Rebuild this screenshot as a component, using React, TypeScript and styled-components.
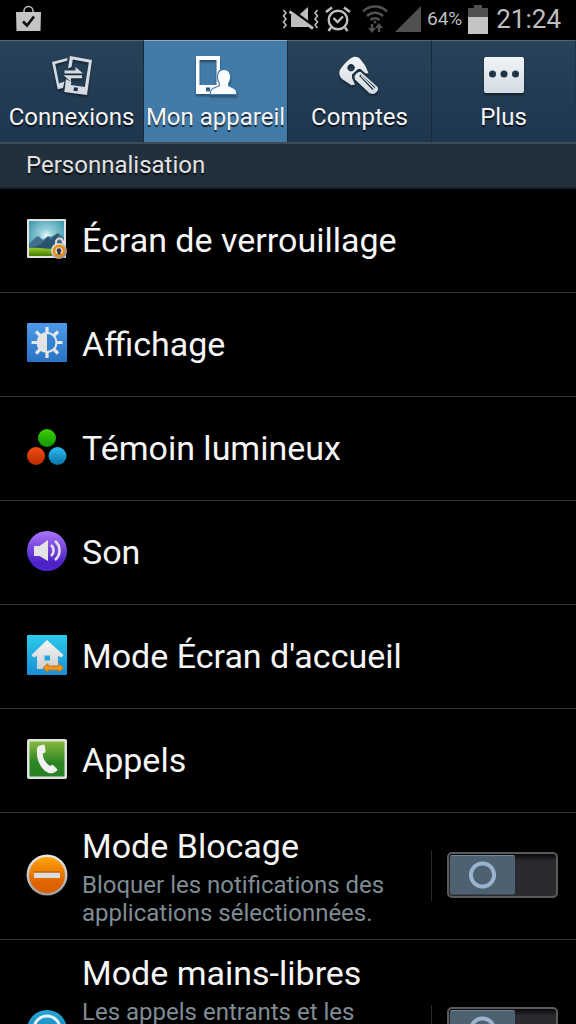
import React, { useState } from "react";
import styled, { createGlobalStyle, css } from "styled-components";

const GlobalStyle = createGlobalStyle`
  *, *::before, *::after { box-sizing: border-box; }
  html, body { margin: 0; background: #000; }
  body { font-family: Roboto, "Noto Sans", sans-serif; color: #f5f5f5; }
`;

const Screen = styled.div`
  display: flex;
  flex-direction: column;
  width: 100%;
  height: 100vh;
  overflow: hidden;
  background: #000;
`;

const StatusBar = styled.header`
  display: flex;
  flex: none;
  align-items: center;
  justify-content: space-between;
  height: 40px;
  padding: 0 15px 2px 16px;
  color: #bebebe;
`;

const StatusGroup = styled.div`
  display: flex;
  align-items: center;
  gap: 6px;
`;

const Battery = styled.span`
  font-size: 19px;
  line-height: 40px;
`;

const Clock = styled.time`
  margin-left: 2px;
  font-size: 26px;
  line-height: 40px;
`;

const Glyph = styled.svg`
  display: block;
  flex: none;
  overflow: visible;
`;

const TabBar = styled.nav`
  display: grid;
  flex: none;
  grid-template-columns: repeat(4, 1fr);
  height: 102px;
`;

const Tab = styled.button<{ $active: boolean }>`
  display: flex;
  flex-direction: column;
  align-items: center;
  min-width: 0;
  margin: 0;
  padding: 11px 0 0;
  border: 0;
  border-top: 1px solid #53697a;
  border-right: 1px solid #182a3a;
  background: linear-gradient(#274259, #1e364e);
  color: #f5f5f5;
  font: inherit;
  font-size: 24px;
  line-height: 28px;
  white-space: nowrap;
  text-shadow: 0 2px 1px rgba(0, 0, 0, 0.7);
  cursor: pointer;

  &:last-child {
    border-right-color: #1e364e;
  }

  ${({ $active }) =>
    $active &&
    css`
      border-top-color: #87aecb;
      background: #437ba8;
    `}

  svg {
    margin-bottom: 7px;
    filter: drop-shadow(0 2px 1px rgba(0, 0, 0, 0.4));
  }
`;

const SectionTitle = styled.h2`
  flex: none;
  margin: 0;
  padding: 0 26px;
  border-top: 2px solid #3c4c59;
  border-bottom: 2px solid #17222b;
  background: #22303c;
  color: #e2e2e2;
  font-size: 24px;
  font-weight: 400;
  line-height: 43px;
  text-shadow: 0 2px 1px rgba(0, 0, 0, 0.7);
`;

const List = styled.ul`
  flex: 1;
  min-height: 0;
  margin: 0;
  padding: 0;
  overflow-y: auto;
  list-style: none;
  scrollbar-width: none;
`;

const Row = styled.li`
  display: flex;
  align-items: center;
  min-height: 104px;
  padding: 0 18px 0 26px;
  border-bottom: 1px solid #333;
`;

const RowLink = styled.a`
  display: flex;
  flex: 1;
  align-items: center;
  gap: 14px;
  min-width: 0;
  padding: 11px 0 12px;
  color: inherit;
  text-decoration: none;

  > svg {
    margin-bottom: 2px;
  }
`;

const RowText = styled.span`
  display: flex;
  flex-direction: column;
  gap: 3px;
  min-width: 0;
`;

const Title = styled.span`
  font-size: 34px;
  line-height: 44px;
`;

const Summary = styled.span`
  color: #7f8c94;
  font-size: 24px;
  line-height: 28px;
`;

const SwitchArea = styled.label`
  display: flex;
  flex: none;
  align-items: center;
  height: 51px;
  margin: 0 0 2px 8px;
  padding-left: 15px;
  border-left: 1px solid #2a2a2a;
  cursor: pointer;
`;

const SwitchInput = styled.input`
  display: grid;
  align-items: stretch;
  width: 111px;
  height: 46px;
  margin: 0;
  padding: 1px;
  appearance: none;
  border: 2px solid #5a5a5a;
  border-radius: 5px;
  background: linear-gradient(#08080a, #2a2a2f 7px);
  cursor: pointer;

  &::before {
    content: "";
    width: 65px;
    border-top: 1px solid #6f8596;
    border-bottom: 1px solid #3a4b58;
    border-radius: 2px;
    background: radial-gradient(circle, #4d6171 9px, #9ab4cd 10px, #9ab4cd 13px, #4d6171 14px);
  }

  &:checked::before {
    justify-self: end;
  }
`;

const BagIcon = () => (
  <Glyph width="26" height="26" viewBox="0 0 26 26" aria-hidden="true">
    <path d="M8 7V5a4.500 4.500 0 0 1 9 0v2" fill="none" stroke="#bebebe" strokeWidth="1.500" />
    <path d="M0 6h25l-.5 19H.5z" fill="#c4c4c4" />
    <path d="M7 15.500l4 4L18 10.500" fill="none" stroke="#111" strokeWidth="2.800" />
  </Glyph>
);

const VibrateIcon = () => (
  <Glyph width="37" height="22" viewBox="0 0 37 22" aria-hidden="true">
    <g fill="none" stroke="#bebebe" strokeWidth="1.600">
      <path d="M1.500 2l2.500 3-2.500 3L4 11l-2.500 3L4 17l-2.500 3" />
      <path d="M35.500 2L33 5l2.500 3L33 11l2.500 3-2.500 3 2.500 3" />
    </g>
    <path d="M9 7h8l9-8v20H9z" fill="#bebebe" />
    <path d="M8 1.500l24 17.800" stroke="#000" strokeWidth="4" />
    <path d="M7.500 3.500L31 20.500" stroke="#bebebe" strokeWidth="2.800" />
  </Glyph>
);

const AlarmIcon = () => (
  <Glyph width="26" height="26" viewBox="0 0 26 26" fill="none" stroke="#bebebe" aria-hidden="true">
    <circle cx="13" cy="14" r="9.300" strokeWidth="2.400" />
    <path d="M8.500 12l4 4 5.500-5.500M6 21.500L3.500 25M20 21.500l2.500 3.500" strokeWidth="2.400" />
    <path d="M1 6l6-4.500M25 6l-6-4.500" strokeWidth="2.800" />
  </Glyph>
);

const WifiSlot = styled.span`
  margin-left: 4px;
`;

const WifiIcon = () => (
  <Glyph width="28" height="28" viewBox="0 0 28 28" fill="none" stroke="#505050" aria-hidden="true">
    <path d="M2 6.500a17 17 0 0 1 24 0M6 11a11.500 11.500 0 0 1 16 0M9.500 15a6.500 6.500 0 0 1 9 0" strokeWidth="2.600" />
    <circle cx="14" cy="17" r="1.500" fill="#505050" stroke="none" />
    <path d="M11 19v5M18 27v-5" strokeWidth="2.400" />
    <path d="M7 23h8l-4 5zM14 23h8l-4-5z" fill="#505050" stroke="none" />
  </Glyph>
);

const SignalIcon = () => (
  <Glyph width="26" height="26" viewBox="0 0 26 26" aria-hidden="true">
    <path d="M0 26L26 0v26z" fill="#505050" />
  </Glyph>
);

const BatteryIcon = () => (
  <Glyph width="20" height="30" viewBox="0 0 20 30" aria-hidden="true">
    <path d="M6 1h8v3h6v10H0V4h6z" fill="#505050" />
    <path d="M0 13h20v17H0z" fill="#c4c4c4" />
  </Glyph>
);

const TabDefs = ({ id }: { id: string }) => (
  <defs>
    <linearGradient id={id} x1="0" y1="0" x2="0" y2="44" gradientUnits="userSpaceOnUse">
      <stop offset="0" stopColor="#f6f7f8" />
      <stop offset="1" stopColor="#d0dae1" />
    </linearGradient>
  </defs>
);

const ConnectionsIcon = () => (
  <Glyph width="42" height="44" viewBox="0 0 42 44" aria-hidden="true">
    <g fill="#d5dbe0">
      <path d="M1 10l15.500-4-.4 2.800L4.200 12 8 31.500l5.500-2L12 36l-5.300 1.300z" />
      <path
        fillRule="evenodd"
        d="M19 4l22 4-5 35-22.700-3L15 27l5.500 3-.7 3 14 2 4-24.500-16-3-1.300 7.500-3.500 1.500zM23 35.200l-.5 3.500 4 .6.500-3.500z"
      />
      <path d="M13.500 18.500h11V15l7.500 6.500H13.500z" />
      <path d="M31 23.300H12.500l7.500 6.500v-3.500h11z" />
    </g>
  </Glyph>
);

const DeviceIcon = () => (
  <Glyph width="42" height="44" viewBox="0 0 42 44" aria-hidden="true">
    <path fillRule="evenodd" fill="#fafcfe" d="M1 4h24v38H1zM4.500 8v25h17V8zM11 35.500v4h4v-4z" />
    <path
      fill="#fafcfe"
      stroke="#437ba8"
      strokeWidth="2.400"
      paintOrder="stroke"
      d="M29 18c4 0 6 3 6 7 0 3-1 5-2 6v3l6 3c2 1 2 3 2 5H16c0-2 0-4 2-5l7-3v-3c-1-1-2-3-2-6 0-4 2-7 6-7z"
    />
  </Glyph>
);

const KeyIcon = () => (
  <Glyph width="42" height="44" viewBox="0 0 42 44" aria-hidden="true">
    <TabDefs id="keyInk" />
    <path
      fillRule="evenodd"
      fill="url(#keyInk)"
      d="M11.500 6.500c4-2.500 7.500-2.500 10.500 1.500l4.500 6 3 7.300-3 .2-5-4.500h-2.500L13 22.500V26l3 6.500-3.500.7L3 27C0 23.500-.5 20.500 1.500 17c3-4 6-8 10-10.500zM12 12a3.700 3.700 0 1 0 .1 0z"
    />
    <path
      fillRule="evenodd"
      fill="url(#keyInk)"
      d="M15.500 24.500c1-2.500 3-4.500 6-4.800L38.500 35c1 1.500.5 3-.5 4.500-1.500 1.500-2.500 2.500-4 2.500l-3.500-.7L16 27.500zM21.800 22.500l-1.600 1.600L33.500 38l1-1L21.500 24l.8-.8L35.500 36l.8-.8z"
    />
  </Glyph>
);

const MoreIcon = () => (
  <Glyph width="42" height="44" viewBox="0 0 42 44" aria-hidden="true">
    <TabDefs id="moreInk" />
    <rect x="1" y="5" width="40" height="36" rx="2" fill="url(#moreInk)" />
    <g fill="#1f3548">
      <circle cx="9.500" cy="22" r="3.500" />
      <circle cx="21" cy="22" r="3.500" />
      <circle cx="32.500" cy="22" r="3.500" />
    </g>
  </Glyph>
);

const LockScreenIcon = () => (
  <Glyph width="42" height="42" viewBox="0 0 42 42" aria-hidden="true">
    <defs>
      <radialGradient id="sky" cx="0.500" cy="0.420" r="0.600">
        <stop offset="0" stopColor="#f2fcfb" />
        <stop offset="0.300" stopColor="#97d0db" />
        <stop offset="1" stopColor="#439bae" />
      </radialGradient>
      <linearGradient id="grass" x1="0" y1="0" x2="0" y2="1">
        <stop offset="0" stopColor="#9bca2a" />
        <stop offset="1" stopColor="#467c04" />
      </linearGradient>
      <linearGradient id="steel" x1="0" y1="0" x2="1" y2="1">
        <stop offset="0" stopColor="#f4f4f4" />
        <stop offset="1" stopColor="#777" />
      </linearGradient>
    </defs>
    <rect x="1" y="1" width="39" height="39" rx="1" fill="#e4e2dc" />
    <rect x="3" y="3" width="35" height="35" fill="url(#sky)" />
    <path d="M3 26l6-6 3-2 5 4 5-4 3 1 7-4 3 2 3 3v12H3z" fill="#416f8d" />
    <path d="M14 27l8-8 3 3 7-7-1 8 7 4v6H3v-3z" fill="#27536e" />
    <path d="M3 30c10-1 18 1 24 1l11-1v8H3z" fill="url(#grass)" />
    <path d="M30 27v-3a3.500 3.500 0 0 1 7 0v3" fill="none" stroke="#d9d9d9" strokeWidth="2.200" />
    <circle cx="33" cy="33" r="8" fill="url(#steel)" />
    <circle cx="33" cy="33" r="5" fill="#d6d6d6" stroke="#f08b0c" strokeWidth="2.400" />
    <circle cx="33" cy="32.500" r="2.200" fill="#30363c" />
    <path d="M32 33.500h2l.8 3h-3.600z" fill="#30363c" />
  </Glyph>
);

const DisplayIcon = () => (
  <Glyph width="42" height="42" viewBox="0 0 42 42" aria-hidden="true">
    <defs>
      <linearGradient id="displayBg" x1="0" y1="0" x2="0" y2="1">
        <stop offset="0" stopColor="#4c9ae9" />
        <stop offset="1" stopColor="#2973c4" />
      </linearGradient>
    </defs>
    <rect x="1" y="1" width="40" height="39" rx="1" fill="url(#displayBg)" />
    <path
      d="M21 5v6M21 30v6M5.500 20.500h6M30.500 20.500h6M10 9.500l4.500 4.500M27.500 27l4.500 4.500M32 9.500L27.500 14M14.500 27L10 31.500"
      stroke="#e6e6e6"
      strokeWidth="3.200"
    />
    <circle cx="21" cy="20.500" r="9.500" fill="#3482d4" stroke="#e6e6e6" strokeWidth="2" />
    <path d="M21 11a9.500 9.500 0 0 0 0 19z" fill="#e3e3e3" />
  </Glyph>
);

const LedIcon = () => (
  <Glyph width="42" height="42" viewBox="0 0 42 42" aria-hidden="true">
    <defs>
      <linearGradient id="ledGreen" x1="0" y1="0" x2="0" y2="1">
        <stop offset="0" stopColor="#3bd000" />
        <stop offset="1" stopColor="#129508" />
      </linearGradient>
      <linearGradient id="ledRed" x1="0" y1="0" x2="0" y2="1">
        <stop offset="0" stopColor="#f04d14" />
        <stop offset="1" stopColor="#bc2a00" />
      </linearGradient>
      <linearGradient id="ledBlue" x1="0" y1="0" x2="0" y2="1">
        <stop offset="0" stopColor="#2dbdf0" />
        <stop offset="1" stopColor="#0872a6" />
      </linearGradient>
    </defs>
    <circle cx="21" cy="12" r="9" fill="url(#ledGreen)" />
    <circle cx="10" cy="30" r="9" fill="url(#ledRed)" />
    <circle cx="31.500" cy="30" r="9" fill="url(#ledBlue)" />
  </Glyph>
);

const SoundIcon = () => (
  <Glyph width="42" height="42" viewBox="0 0 42 42" aria-hidden="true">
    <defs>
      <linearGradient id="soundBg" x1="0" y1="0" x2="0" y2="1">
        <stop offset="0" stopColor="#ab74f8" />
        <stop offset="0.800" stopColor="#4b20c6" />
        <stop offset="1" stopColor="#5226cf" />
      </linearGradient>
    </defs>
    <circle cx="21" cy="21" r="20" fill="url(#soundBg)" />
    <path d="M8 16h5.500l8.500-6v21l-8.500-5H8z" fill="#e4e4e4" />
    <path d="M25 15c3.500 3 3.500 8 0 11M29 11c6 5 6 14 0 19" fill="none" stroke="#e4e4e4" strokeWidth="2.600" />
  </Glyph>
);

const HomeIcon = () => (
  <Glyph width="42" height="42" viewBox="0 0 42 42" aria-hidden="true">
    <defs>
      <linearGradient id="homeBg" x1="0" y1="0" x2="0" y2="1">
        <stop offset="0" stopColor="#2bcbea" />
        <stop offset="1" stopColor="#188fd6" />
      </linearGradient>
      <linearGradient id="homeWall" x1="0" y1="0" x2="0" y2="1">
        <stop offset="0" stopColor="#f6f6f6" />
        <stop offset="1" stopColor="#cfcfcf" />
      </linearGradient>
    </defs>
    <rect x="1" y="1" width="40" height="40" rx="1" fill="url(#homeBg)" />
    <path
      fillRule="evenodd"
      fill="url(#homeWall)"
      d="M21 6l16.500 15-2 2.500L32 22v13H11V22l-3.500 1.500-2-2.500zM18.500 21.500v5h5.500v-5z"
    />
    <path d="M17 34l5-4.500v2.500h10.500v-2.500l5 4.500-5 4.500V36H22v2.500z" fill="#f7941c" stroke="#b4782e" strokeWidth="1" />
  </Glyph>
);

const CallIcon = () => (
  <Glyph width="42" height="42" viewBox="0 0 42 42" aria-hidden="true">
    <defs>
      <linearGradient id="callBg" x1="0" y1="0" x2="0" y2="1">
        <stop offset="0" stopColor="#87b83d" />
        <stop offset="0.600" stopColor="#2c8524" />
        <stop offset="1" stopColor="#297f25" />
      </linearGradient>
    </defs>
    <rect x="1" y="1" width="40" height="40" rx="2" fill="#dfe3df" />
    <rect x="3.500" y="3.500" width="35" height="35" fill="url(#callBg)" />
    <path
      d="M12.500 8l5-1.500c1 0 1.300 1 1.500 2.500l.6 4c0 1.500-1 2-2.800 2.500-.3 5 3.500 10.500 7.500 12.500 1.500-1.500 2.300-1.500 3.300-.5l3 3c1 1 1 2 0 2.500-3 2.500-6 3-9 1.500C14 31 10 20 11 11.500c.2-1.500.5-3 1.500-3.500z"
      fill="#f0f0f0"
    />
  </Glyph>
);

const BlockIcon = () => (
  <Glyph width="42" height="42" viewBox="0 0 42 42" aria-hidden="true">
    <defs>
      <linearGradient id="blockBg" x1="0" y1="0" x2="0" y2="1">
        <stop offset="0" stopColor="#ffa30a" />
        <stop offset="0.700" stopColor="#e06400" />
        <stop offset="1" stopColor="#d85f00" />
      </linearGradient>
      <linearGradient id="blockRing" x1="0" y1="0" x2="0" y2="1">
        <stop offset="0" stopColor="#ececec" />
        <stop offset="1" stopColor="#9c9c9c" />
      </linearGradient>
    </defs>
    <circle cx="21" cy="21" r="20.500" fill="url(#blockRing)" />
    <circle cx="21" cy="21" r="18" fill="url(#blockBg)" />
    <path d="M8 18.500h26V24H8z" fill="#dcdcdc" />
    <path d="M8 18h26" stroke="#a85408" />
  </Glyph>
);

const HandsFreeIcon = () => (
  <Glyph width="42" height="42" viewBox="0 0 42 42" aria-hidden="true">
    <defs>
      <linearGradient id="handsBg" x1="0" y1="0" x2="0" y2="1">
        <stop offset="0" stopColor="#25a7d6" />
        <stop offset="1" stopColor="#0f6fae" />
      </linearGradient>
    </defs>
    <circle cx="21" cy="21" r="20" fill="url(#handsBg)" />
    <circle cx="21" cy="20" r="13" fill="none" stroke="#e8f2f6" strokeWidth="3" />
    <circle cx="21" cy="21" r="4" fill="#e8f2f6" />
  </Glyph>
);

const tabs = [
  { label: "Connexions", Icon: ConnectionsIcon },
  { label: "Mon appareil", Icon: DeviceIcon },
  { label: "Comptes", Icon: KeyIcon },
  { label: "Plus", Icon: MoreIcon },
];

const settings = [
  { id: "lock", title: "Écran de verrouillage", Icon: LockScreenIcon },
  { id: "display", title: "Affichage", Icon: DisplayIcon },
  { id: "led", title: "Témoin lumineux", Icon: LedIcon },
  { id: "sound", title: "Son", Icon: SoundIcon },
  { id: "home", title: "Mode Écran d'accueil", Icon: HomeIcon },
  { id: "calls", title: "Appels", Icon: CallIcon },
  {
    id: "blocking",
    title: "Mode Blocage",
    summary: "Bloquer les notifications des applications sélectionnées.",
    Icon: BlockIcon,
  },
  {
    id: "handsfree",
    title: "Mode mains-libres",
    summary:
      "Les appels entrants et les nouvelles notifications sont lus automatiquement à voix haute lorsque ce mode est activé.",
    Icon: HandsFreeIcon,
  },
];

export default function App() {
  const [active, setActive] = useState("Mon appareil");

  return (
    <Screen>
      <GlobalStyle />
      <StatusBar>
        <BagIcon />
        <StatusGroup>
          <VibrateIcon />
          <AlarmIcon />
          <WifiSlot>
            <WifiIcon />
          </WifiSlot>
          <SignalIcon />
          <Battery>64%</Battery>
          <BatteryIcon />
          <Clock>21:24</Clock>
        </StatusGroup>
      </StatusBar>
      <TabBar>
        {tabs.map(({ label, Icon }) => (
          <Tab key={label} type="button" $active={label === active} onClick={() => setActive(label)}>
            <Icon />
            {label}
          </Tab>
        ))}
      </TabBar>
      <SectionTitle>Personnalisation</SectionTitle>
      <List>
        {settings.map(({ id, title, summary, Icon }) => (
          <Row key={id}>
            <RowLink href={`#${id}`}>
              <Icon />
              <RowText>
                <Title>{title}</Title>
                {summary && <Summary>{summary}</Summary>}
              </RowText>
            </RowLink>
            {summary && (
              <SwitchArea>
                <SwitchInput type="checkbox" aria-label={title} />
              </SwitchArea>
            )}
          </Row>
        ))}
      </List>
    </Screen>
  );
}
